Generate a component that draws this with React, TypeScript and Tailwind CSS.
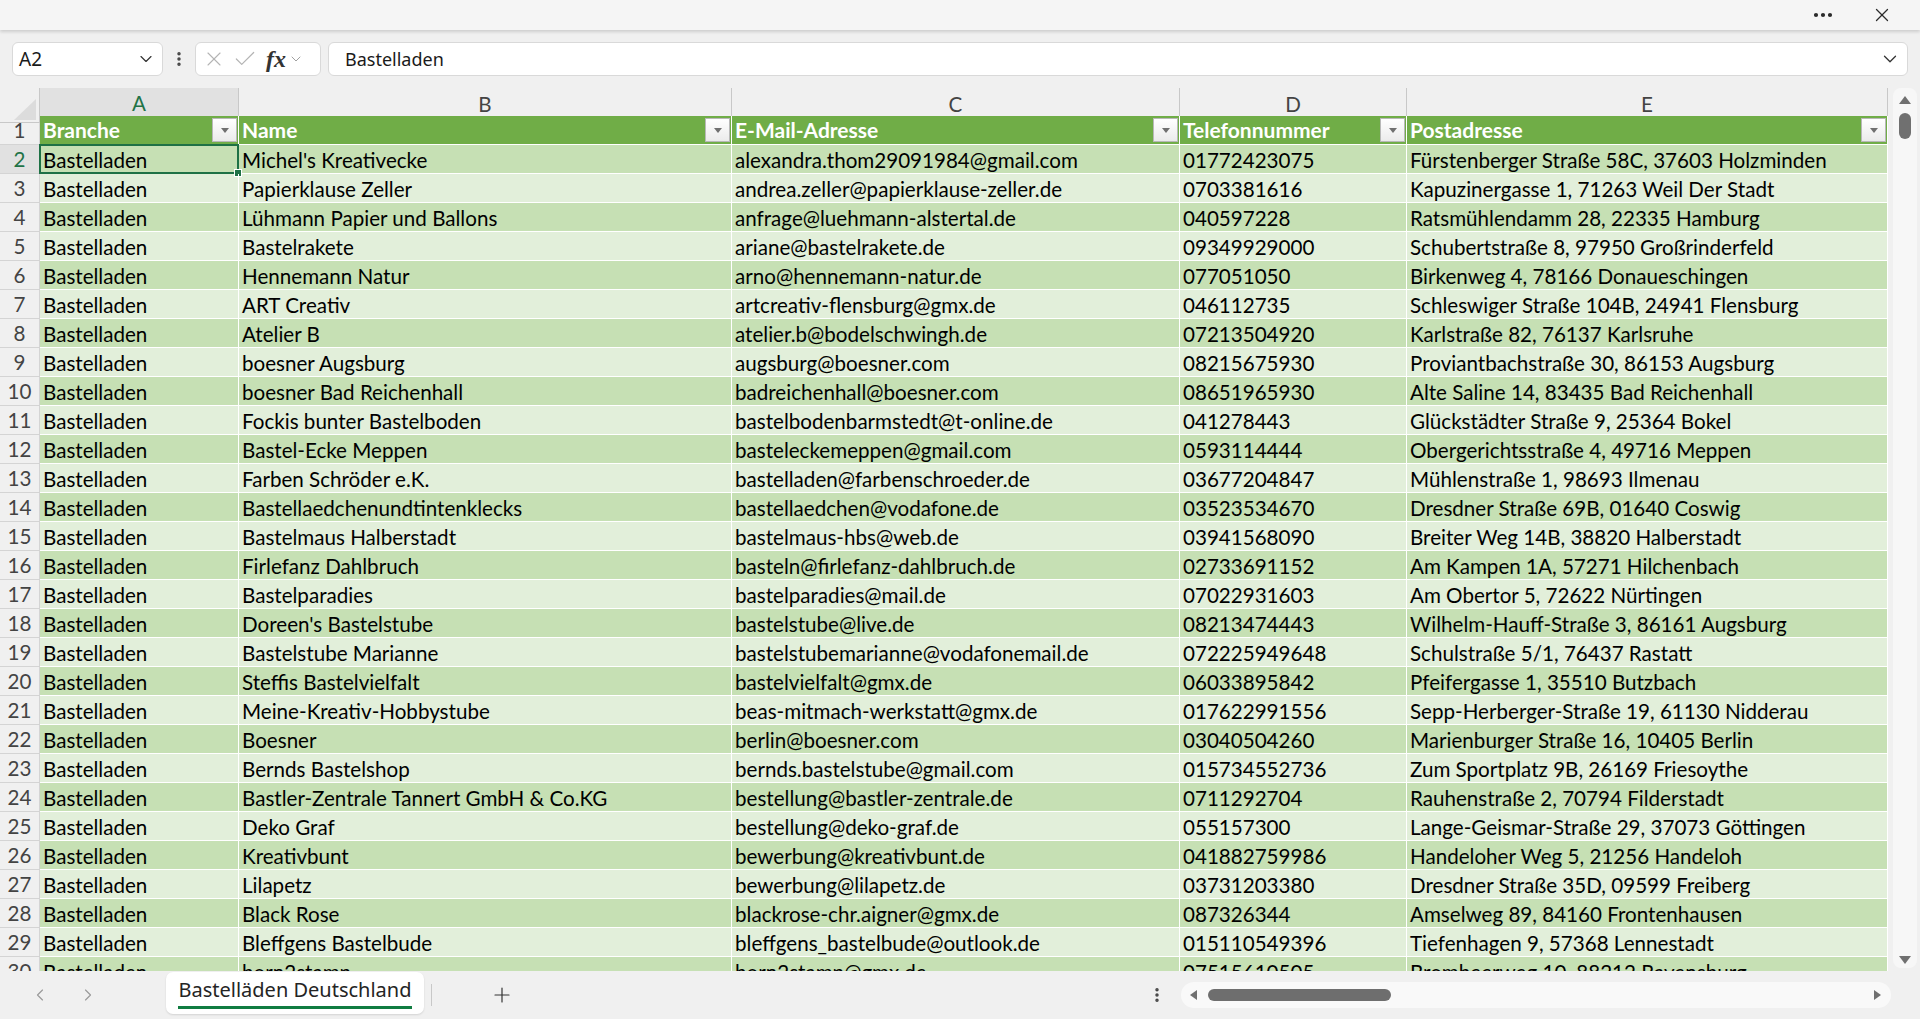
import { Check, ChevronDown, ChevronLeft, ChevronRight, Ellipsis, EllipsisVertical, Plus, X } from 'lucide-react';

interface Shop {
    name: string;
    email: string;
    phone: string;
    address: string;
}

const shops: Shop[] = [
    { name: "Michel's Kreativecke", email: 'alexandra.thom29091984@gmail.com', phone: '01772423075', address: 'Fürstenberger Straße 58C, 37603 Holzminden' },
    { name: 'Papierklause Zeller', email: 'andrea.zeller@papierklause-zeller.de', phone: '0703381616', address: 'Kapuzinergasse 1, 71263 Weil Der Stadt' },
    { name: 'Lühmann Papier und Ballons', email: 'anfrage@luehmann-alstertal.de', phone: '040597228', address: 'Ratsmühlendamm 28, 22335 Hamburg' },
    { name: 'Bastelrakete', email: 'ariane@bastelrakete.de', phone: '09349929000', address: 'Schubertstraße 8, 97950 Großrinderfeld' },
    { name: 'Hennemann Natur', email: 'arno@hennemann-natur.de', phone: '077051050', address: 'Birkenweg 4, 78166 Donaueschingen' },
    { name: 'ART Creativ', email: 'artcreativ-flensburg@gmx.de', phone: '046112735', address: 'Schleswiger Straße 104B, 24941 Flensburg' },
    { name: 'Atelier B', email: 'atelier.b@bodelschwingh.de', phone: '07213504920', address: 'Karlstraße 82, 76137 Karlsruhe' },
    { name: 'boesner Augsburg', email: 'augsburg@boesner.com', phone: '08215675930', address: 'Proviantbachstraße 30, 86153 Augsburg' },
    { name: 'boesner Bad Reichenhall', email: 'badreichenhall@boesner.com', phone: '08651965930', address: 'Alte Saline 14, 83435 Bad Reichenhall' },
    { name: 'Fockis bunter Bastelboden', email: 'bastelbodenbarmstedt@t-online.de', phone: '041278443', address: 'Glückstädter Straße 9, 25364 Bokel' },
    { name: 'Bastel-Ecke Meppen', email: 'basteleckemeppen@gmail.com', phone: '0593114444', address: 'Obergerichtsstraße 4, 49716 Meppen' },
    { name: 'Farben Schröder e.K.', email: 'bastelladen@farbenschroeder.de', phone: '03677204847', address: 'Mühlenstraße 1, 98693 Ilmenau' },
    { name: 'Bastellaedchenundtintenklecks', email: 'bastellaedchen@vodafone.de', phone: '03523534670', address: 'Dresdner Straße 69B, 01640 Coswig' },
    { name: 'Bastelmaus Halberstadt', email: 'bastelmaus-hbs@web.de', phone: '03941568090', address: 'Breiter Weg 14B, 38820 Halberstadt' },
    { name: 'Firlefanz Dahlbruch', email: 'basteln@firlefanz-dahlbruch.de', phone: '02733691152', address: 'Am Kampen 1A, 57271 Hilchenbach' },
    { name: 'Bastelparadies', email: 'bastelparadies@mail.de', phone: '07022931603', address: 'Am Obertor 5, 72622 Nürtingen' },
    { name: "Doreen's Bastelstube", email: 'bastelstube@live.de', phone: '08213474443', address: 'Wilhelm-Hauff-Straße 3, 86161 Augsburg' },
    { name: 'Bastelstube Marianne', email: 'bastelstubemarianne@vodafonemail.de', phone: '072225949648', address: 'Schulstraße 5/1, 76437 Rastatt' },
    { name: 'Steffis Bastelvielfalt', email: 'bastelvielfalt@gmx.de', phone: '06033895842', address: 'Pfeifergasse 1, 35510 Butzbach' },
    { name: 'Meine-Kreativ-Hobbystube', email: 'beas-mitmach-werkstatt@gmx.de', phone: '017622991556', address: 'Sepp-Herberger-Straße 19, 61130 Nidderau' },
    { name: 'Boesner', email: 'berlin@boesner.com', phone: '03040504260', address: 'Marienburger Straße 16, 10405 Berlin' },
    { name: 'Bernds Bastelshop', email: 'bernds.bastelstube@gmail.com', phone: '015734552736', address: 'Zum Sportplatz 9B, 26169 Friesoythe' },
    { name: 'Bastler-Zentrale Tannert GmbH & Co.KG', email: 'bestellung@bastler-zentrale.de', phone: '0711292704', address: 'Rauhenstraße 2, 70794 Filderstadt' },
    { name: 'Deko Graf', email: 'bestellung@deko-graf.de', phone: '055157300', address: 'Lange-Geismar-Straße 29, 37073 Göttingen' },
    { name: 'Kreativbunt', email: 'bewerbung@kreativbunt.de', phone: '041882759986', address: 'Handeloher Weg 5, 21256 Handeloh' },
    { name: 'Lilapetz', email: 'bewerbung@lilapetz.de', phone: '03731203380', address: 'Dresdner Straße 35D, 09599 Freiberg' },
    { name: 'Black Rose', email: 'blackrose-chr.aigner@gmx.de', phone: '087326344', address: 'Amselweg 89, 84160 Frontenhausen' },
    { name: 'Bleffgens Bastelbude', email: 'bleffgens_bastelbude@outlook.de', phone: '015110549396', address: 'Tiefenhagen 9, 57368 Lennestadt' },
    { name: 'born2stamp', email: 'born2stamp@gmx.de', phone: '07515610505', address: 'Brombeerweg 10, 88212 Ravensburg' },
];

const headers = [
    { letter: 'A', title: 'Branche' },
    { letter: 'B', title: 'Name' },
    { letter: 'C', title: 'E-Mail-Adresse' },
    { letter: 'D', title: 'Telefonnummer' },
    { letter: 'E', title: 'Postadresse' },
];

const gridCols = 'grid grid-cols-[40px_199px_493px_448px_227px_481px]';

function FilterButton() {
    return (
        <div className="w-[25px] h-[24px] shrink-0 border border-[#b8b8b8] bg-gradient-to-b from-white to-[#ebebeb] flex items-center justify-center">
            <div className="w-0 h-0 border-l-[4px] border-r-[4px] border-t-[5px] border-l-transparent border-r-transparent border-t-[#707070]" />
        </div>
    );
}

function Cell({ text }: { text: string }) {
    return (
        <div className="h-[29px] border-r border-b border-white pl-[3px] leading-[30px] whitespace-nowrap overflow-hidden text-black">
            {text}
        </div>
    );
}

export default function App() {
    return (
        <div className="w-[1920px] h-[1019px] overflow-hidden bg-[#f0f0f0] flex flex-col font-['Lato',sans-serif] text-[20.6px]">
            {/* title strip */}
            <div className="relative z-10 h-[30px] shrink-0 bg-[#f5f5f5] shadow-[0_2px_3px_rgba(0,0,0,0.14)] flex items-center justify-end pr-[27px] gap-[36px] text-[#2b2b2b]">
                <Ellipsis size={24} strokeWidth={2.2} />
                <X size={22} strokeWidth={1.4} />
            </div>

            {/* name box + formula bar */}
            <div className="h-[58px] shrink-0 flex items-center pl-[12px] font-['Noto_Sans',sans-serif]">
                <div className="w-[151px] h-[34px] rounded-[6px] border border-[#d9d9d9] bg-white flex items-center justify-between pl-[6px] pr-[6px]">
                    <span className="text-[19px] text-[#1a1a1a]">A2</span>
                    <ChevronDown size={20} strokeWidth={1.4} className="text-[#333]" />
                </div>
                <EllipsisVertical size={18} strokeWidth={2.6} className="ml-[7px] text-[#444]" />
                <div className="ml-[7px] w-[126px] h-[34px] rounded-[6px] border border-[#d9d9d9] bg-white flex items-center pl-[6px] text-[#b4b4b4]">
                    <X size={24} strokeWidth={1.1} />
                    <Check size={26} strokeWidth={1.1} className="ml-[6px]" />
                    <span className="ml-[8px] font-['Liberation_Serif',serif] italic font-bold text-[24px] text-[#333] leading-none">fx</span>
                    <ChevronDown size={16} strokeWidth={1.4} className="ml-[2px] text-[#999]" />
                </div>
                <div className="ml-[7px] w-[1580px] h-[34px] rounded-[6px] border border-[#d9d9d9] bg-white flex items-center justify-between pl-[16px] pr-[6px]">
                    <span className="text-[18px] text-[#1a1a1a]">Bastelladen</span>
                    <ChevronDown size={22} strokeWidth={1.4} className="text-[#333]" />
                </div>
            </div>

            {/* sheet + vertical scrollbar */}
            <div className="flex-1 min-h-0 flex">
                <div className="w-[1888px] overflow-hidden bg-white">
                    {/* column letters */}
                    <div className={`${gridCols} h-[28px] bg-[#f0f0f0]`}>
                        <div className="relative border-r border-b border-[#c8c8c8]">
                            <svg className="absolute right-[3px] bottom-[2px]" width="22" height="21" viewBox="0 0 22 21">
                                <polygon points="22,0 22,21 0,21" fill="#dcdcdc" />
                            </svg>
                        </div>
                        {headers.map((h, i) => (
                            <div
                                key={h.letter}
                                className={
                                    i === 0
                                        ? 'flex items-center justify-center pb-[2px] bg-[#e1e1e1] border-r border-[#c8c8c8] border-b-2 border-b-[#217346] text-[#217346]'
                                        : 'flex items-center justify-center pb-[2px] border-r border-b border-[#c8c8c8] text-[#444]'
                                }
                            >
                                {h.letter}
                            </div>
                        ))}
                    </div>

                    {/* table header row */}
                    <div className={`${gridCols} h-[29px]`}>
                        <div className="h-[29px] bg-[#f0f0f0] border-r border-b border-[#d4d4d4] flex items-center justify-center text-[#444]">1</div>
                        {headers.map((h) => (
                            <div key={h.title} className="h-[29px] bg-[#70ad47] border-r border-b border-white flex items-center justify-between pl-[3px] pr-[1px]">
                                <span className="font-bold text-[21px] text-white whitespace-nowrap leading-[30px]">{h.title}</span>
                                <FilterButton />
                            </div>
                        ))}
                    </div>

                    {/* data rows */}
                    {shops.map((s, i) => {
                        const rowNo = i + 2;
                        const band = i % 2 === 0 ? 'bg-[#c6e0b4]' : 'bg-[#e2efda]';
                        const selected = rowNo === 2;
                        return (
                            <div key={rowNo} className={`${gridCols} h-[29px] ${band}`}>
                                <div
                                    className={
                                        selected
                                            ? 'h-[29px] bg-[#e1e1e1] border-r border-b border-[#d4d4d4] flex items-center justify-center text-[#217346]'
                                            : 'h-[29px] bg-[#f0f0f0] border-r border-b border-[#d4d4d4] flex items-center justify-center text-[#444]'
                                    }
                                >
                                    {rowNo}
                                </div>
                                <div className="relative h-[29px] border-r border-b border-white pl-[3px] leading-[30px] whitespace-nowrap text-black">
                                    Bastelladen
                                    {selected && (
                                        <>
                                            <div className="absolute -left-[1px] -top-[1px] -right-[1px] bottom-[-1px] border-2 border-[#1e7145]" />
                                            <div className="absolute -right-[4px] -bottom-[4px] w-[8px] h-[8px] bg-[#1e7145] border border-white" />
                                        </>
                                    )}
                                </div>
                                <Cell text={s.name} />
                                <Cell text={s.email} />
                                <Cell text={s.phone} />
                                <Cell text={s.address} />
                            </div>
                        );
                    })}
                </div>

                <div className="ml-[5px] mb-[3px] w-[24px] rounded-[8px] bg-[#f7f7f7] flex flex-col items-center pt-[8px] pb-[4px]">
                    <div className="w-0 h-0 border-l-[6px] border-r-[6px] border-b-[8px] border-l-transparent border-r-transparent border-b-[#707070]" />
                    <div className="mt-[9px] w-[12px] h-[26px] rounded-full bg-[#707070]" />
                    <div className="flex-1" />
                    <div className="w-0 h-0 border-l-[6px] border-r-[6px] border-t-[8px] border-l-transparent border-r-transparent border-t-[#707070]" />
                </div>
            </div>

            {/* sheet tabs + horizontal scrollbar */}
            <div className="h-[48px] shrink-0 flex items-center font-['Noto_Sans',sans-serif]">
                <div className="pl-[30px] flex items-center gap-[28px] text-[#9a9a9a]">
                    <ChevronLeft size={20} strokeWidth={1.4} />
                    <ChevronRight size={20} strokeWidth={1.4} />
                </div>
                <div className="ml-[68px] self-start mt-[1px] w-[258px] h-[42px] rounded-[7px] bg-white shadow-[0_1px_2px_rgba(0,0,0,0.12)] flex flex-col items-center justify-center">
                    <span className="text-[20px] text-[#242424] leading-[26px]">Bastelläden Deutschland</span>
                    <div className="mt-[3px] w-[234px] h-[3px] bg-[#107c41]" />
                </div>
                <div className="ml-[7px] w-px h-[22px] bg-[#c8c8c8]" />
                <Plus size={24} strokeWidth={1.2} className="ml-[58px] text-[#333]" />
                <div className="flex-1" />
                <EllipsisVertical size={18} strokeWidth={2.6} className="text-[#444]" />
                <div className="ml-[15px] mr-[29px] w-[710px] h-[26px] rounded-full bg-[#f9f9f9] flex items-center pl-[9px] pr-[10px]">
                    <div className="w-0 h-0 border-t-[5px] border-b-[5px] border-r-[7px] border-t-transparent border-b-transparent border-r-[#707070]" />
                    <div className="ml-[11px] w-[183px] h-[12px] rounded-full bg-[#6e6e6e]" />
                    <div className="flex-1" />
                    <div className="w-0 h-0 border-t-[5px] border-b-[5px] border-l-[7px] border-t-transparent border-b-transparent border-l-[#707070]" />
                </div>
            </div>
        </div>
    );
}
